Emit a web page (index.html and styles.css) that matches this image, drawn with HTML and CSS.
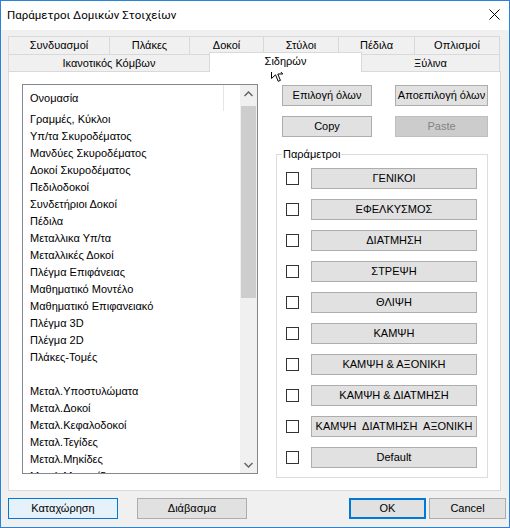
FILE: index.html
```html
<!DOCTYPE html>
<html lang="el">
<head>
<meta charset="utf-8">
<title>Παράμετροι Δομικών Στοιχείων</title>
<link rel="stylesheet" href="styles.css">
</head>
<body>
<div class="window">
  <div class="titlebar">
    <span class="title">Παράμετροι Δομικών Στοιχείων</span>
    <svg class="close" width="11" height="11" viewBox="0 0 11 11"><path d="M0.5 0.5 L10.5 10.5 M10.5 0.5 L0.5 10.5" stroke="#000" stroke-width="1" fill="none"/></svg>
  </div>
  <div class="client">
    <div class="tabs">
      <div class="tabrow">
        <div class="tab t1">Συνδυασμοί</div>
        <div class="tab t2">Πλάκες</div>
        <div class="tab t3">Δοκοί</div>
        <div class="tab t4">Στύλοι</div>
        <div class="tab t5">Πέδιλα</div>
        <div class="tab t6 last">Οπλισμοί</div>
      </div>
      <div class="tabrow">
        <div class="tab t7">Ικανοτικός Κόμβων</div>
        <div class="tab t8 selected">Σιδηρών</div>
        <div class="tab t9 last after-sel">Ξύλινα</div>
      </div>
    </div>
    <div class="panel">
      <div class="listbox">
        <div class="list-content">
          <div class="list-header"><div class="hdr-cell">Ονομασία</div></div>
          <div class="item">Γραμμές, Κύκλοι</div>
          <div class="item">Υπ/τα Σκυροδέματος</div>
          <div class="item">Μανδύες Σκυροδέματος</div>
          <div class="item">Δοκοί Σκυροδέματος</div>
          <div class="item">Πεδιλοδοκοί</div>
          <div class="item">Συνδετήριοι Δοκοί</div>
          <div class="item">Πέδιλα</div>
          <div class="item">Μεταλλικα Υπ/τα</div>
          <div class="item">Μεταλλικές Δοκοί</div>
          <div class="item">Πλέγμα Επιφάνειας</div>
          <div class="item">Μαθηματικό Μοντέλο</div>
          <div class="item">Μαθηματικό Επιφανειακό</div>
          <div class="item">Πλέγμα 3D</div>
          <div class="item">Πλέγμα 2D</div>
          <div class="item">Πλάκες-Τομές</div>
          <div class="item">&nbsp;</div>
          <div class="item">Μεταλ.Υποστυλώματα</div>
          <div class="item">Μεταλ.Δοκοί</div>
          <div class="item">Μεταλ.Κεφαλοδοκοί</div>
          <div class="item">Μεταλ.Τεγίδες</div>
          <div class="item">Μεταλ.Μηκίδες</div>
          <div class="item">Μεταλ.Μετωπίδες</div>
        </div>
        <div class="scrollbar">
          <div class="arrow"><svg width="9" height="6" viewBox="0 0 9 6"><path d="M0.5 5 L4.5 1 L8.5 5" stroke="#606060" stroke-width="1.4" fill="none"/></svg></div>
          <div class="thumb"></div>
          <div class="track-rest"></div>
          <div class="arrow"><svg width="9" height="6" viewBox="0 0 9 6"><path d="M0.5 1 L4.5 5 L8.5 1" stroke="#606060" stroke-width="1.4" fill="none"/></svg></div>
        </div>
      </div>
      <div class="side">
        <div class="btnrow">
          <div class="btn b-left">Επιλογή όλων</div>
          <div class="btn b-right">Αποεπιλογή όλων</div>
        </div>
        <div class="btnrow second">
          <div class="btn b-left">Copy</div>
          <div class="btn b-right disabled">Paste</div>
        </div>
        <div class="group">
          <span class="legend">Παράμετροι</span>
          <div class="params">
            <div class="param"><span class="check"></span><div class="btn pbtn">ΓΕΝΙΚΟΙ</div></div>
            <div class="param"><span class="check"></span><div class="btn pbtn">ΕΦΕΛΚΥΣΜΟΣ</div></div>
            <div class="param"><span class="check"></span><div class="btn pbtn">ΔΙΑΤΜΗΣΗ</div></div>
            <div class="param"><span class="check"></span><div class="btn pbtn">ΣΤΡΕΨΗ</div></div>
            <div class="param"><span class="check"></span><div class="btn pbtn">ΘΛΙΨΗ</div></div>
            <div class="param"><span class="check"></span><div class="btn pbtn">ΚΑΜΨΗ</div></div>
            <div class="param"><span class="check"></span><div class="btn pbtn">ΚΑΜΨΗ &amp; ΑΞΟΝΙΚΗ</div></div>
            <div class="param"><span class="check"></span><div class="btn pbtn">ΚΑΜΨΗ &amp; ΔΙΑΤΜΗΣΗ</div></div>
            <div class="param"><span class="check"></span><div class="btn pbtn pre">ΚΑΜΨΗ  ΔΙΑΤΜΗΣΗ  ΑΞΟΝΙΚΗ</div></div>
            <div class="param"><span class="check"></span><div class="btn pbtn">Default</div></div>
          </div>
        </div>
      </div>
    </div>
    <div class="footer">
      <div class="btn fbtn default">Καταχώρηση</div>
      <div class="btn fbtn read">Διάβασμα</div>
      <div class="btn fbtn2 ok">OK</div>
      <div class="btn fbtn2 cancel">Cancel</div>
    </div>
  </div>
  <svg class="cursor" width="13" height="21" viewBox="0 0 13 21"><path d="M0.5 0.5 L0.5 16.5 L4.5 12.8 L7.2 19.3 L9.4 18.4 L6.8 12 L11.8 12 Z" fill="#fff" stroke="#000" stroke-width="1" stroke-linejoin="miter"/></svg>
</div>
</body>
</html>
```
FILE: styles.css
```css
* { box-sizing: border-box; }
html, body { margin: 0; padding: 0; }
body {
  width: 510px;
  height: 528px;
  overflow: hidden;
  font-family: "Liberation Sans", Arial, sans-serif;
  font-size: 11px;
  color: #000;
  background: #f0f0f0;
}
.window {
  position: relative;
  width: 510px;
  height: 528px;
  border: 1px solid #2b83d6;
  background: #f0f0f0;
  display: flex;
  flex-direction: column;
}
.titlebar {
  height: 29px;
  flex: none;
  background: #fff;
  display: flex;
  align-items: center;
  justify-content: space-between;
  padding: 0 9px 2px 6px;
}
.title {
  font-family: Roboto, "Noto Sans", sans-serif;
  font-size: 11.5px;
  line-height: 16px;
}
.close { display: block; }

.client {
  flex: 1;
  padding: 6px 7px 0 7px;
}
.tabs { width: 494px; }
.tabrow { display: flex; height: 18px; }
.tabrow + .tabrow { height: 17px; }
.tab {
  height: 100%;
  border-left: 1px solid #d9d9d9;
  border-top: 1px solid #d9d9d9;
  background: #f0f0f0;
  display: flex;
  align-items: center;
  justify-content: center;
  line-height: 13px;
  white-space: nowrap;
}
.tab.last { border-right: 1px solid #d9d9d9; }
.tab.after-sel { border-left: none; }
.t1 { width: 101px; }
.t2 { width: 80px; }
.t3 { width: 74px; }
.t4 { width: 75px; }
.t5 { width: 76px; }
.t6 { width: 86px; }
.t7 { width: 201px; }
.t8 { width: 153px; }
.t9 { width: 138px; }
.tab.selected {
  position: relative;
  z-index: 1;
  height: 20px;
  margin-top: -2px;
  background: #fff;
  border-right: 1px solid #d9d9d9;
  padding-bottom: 2px;
}

.panel {
  width: 493px;
  height: 420px;
  background: #fff;
  border: 1px solid #d9d9d9;
  display: flex;
  align-items: flex-start;
  padding: 12px 0 0 13px;
}
.listbox {
  width: 236px;
  height: 390px;
  border: 1px solid #828790;
  display: flex;
  background: #fff;
  overflow: hidden;
}
.list-content {
  flex: 1;
  overflow: hidden;
}
.list-header {
  height: 26px;
  display: flex;
}
.hdr-cell {
  width: 201px;
  height: 100%;
  border-right: 1px solid #e5e5e5;
  display: flex;
  align-items: center;
  padding-left: 7px;
  padding-bottom: 1px;
}
.item {
  height: 17px;
  line-height: 17px;
  padding-left: 7px;
  white-space: nowrap;
}
.scrollbar {
  width: 17px;
  flex: none;
  background: #f0f0f0;
  display: flex;
  flex-direction: column;
}
.arrow {
  height: 17px;
  flex: none;
  display: flex;
  align-items: center;
  justify-content: center;
}
.arrow svg { display: block; }
.thumb {
  height: 192px;
  margin: 4px 1px 0 1px;
  background: #cdcdcd;
  flex: none;
}
.track-rest { flex: 1; }

.side {
  width: 212px;
  margin-left: 18px;
  padding-top: 1px;
}
.btnrow {
  display: flex;
  padding-left: 6px;
}
.btnrow.second { margin-top: 10px; }
.btn {
  height: 21px;
  background: #e1e1e1;
  border: 1px solid #adadad;
  display: flex;
  align-items: center;
  justify-content: center;
  line-height: 13px;
  white-space: nowrap;
}
.b-left { width: 90px; }
.b-right { width: 93px; margin-left: auto; }
.btn.disabled {
  background: #cccccc;
  border-color: #bfbfbf;
  color: #838383;
}

.group {
  margin-top: 17px;
  height: 324px;
  border: 1px solid #dcdcdc;
}
.legend {
  display: table;
  margin: -8px 0 0 5px;
  padding: 0 1px;
  line-height: 15px;
  background: #fff;
}
.params {
  margin-top: 6px;
  padding-left: 9px;
  display: flex;
  flex-direction: column;
  gap: 10px;
}
.param {
  display: flex;
  align-items: center;
  height: 21px;
}
.check {
  width: 13px;
  height: 13px;
  border: 1px solid #333;
  background: #fff;
  margin-right: 12px;
  flex: none;
}
.pbtn { width: 166px; }
.pbtn.pre { white-space: pre; }

.footer {
  margin-top: 7px;
  margin-right: -4px;
  display: flex;
}
.fbtn { width: 110px; }
.fbtn.default {
  background: #e5f1fb;
  border-color: #0078d7;
}
.fbtn.read { margin-left: 19px; }
.fbtn2 { width: 77px; }
.ok {
  margin-left: auto;
  border: 2px solid #0078d7;
}
.cancel { margin-left: 3px; }

.cursor {
  position: absolute;
  left: 270px;
  top: 61px;
  display: block;
}
```
